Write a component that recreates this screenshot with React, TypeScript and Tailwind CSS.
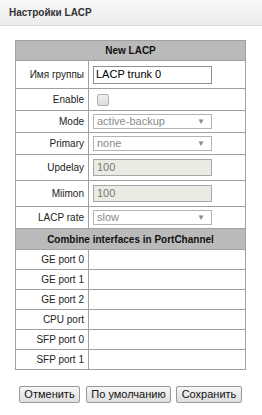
const font = { fontFamily: '"Liberation Sans", Arial, sans-serif' };

function Label({ children }: { children: React.ReactNode }) {
  return (
    <div className="w-[73px] shrink-0 h-full border-r border-[#a0a0a0] flex items-center justify-end pr-[4px] text-[10px] text-[#222] whitespace-nowrap">
      {children}
    </div>
  );
}

function Row({ label, h, children }: { label: string; h: string; children?: React.ReactNode }) {
  return (
    <div className={`flex border-b border-[#a0a0a0] ${h}`}>
      <Label>{label}</Label>
      <div className="flex-1 flex items-center pl-[4px]">{children}</div>
    </div>
  );
}

function Select({ value }: { value: string }) {
  return (
    <div className="w-[119px] h-[15px] border border-[#b4b4b4] bg-white flex items-center justify-between pl-[3px] pr-[6px] text-[11px] text-[#8a8a8a] leading-none">
      <span>{value}</span>
      <span className="text-[8px] text-[#888]">▼</span>
    </div>
  );
}

function Disabled({ value }: { value: string }) {
  return (
    <div className="w-[119px] h-[17px] border border-[#a8a8a8] bg-[#ebebe4] flex items-center pl-[3px] text-[11px] text-[#777] leading-none">
      {value}
    </div>
  );
}

function Head({ title, h }: { title: string; h: string }) {
  return (
    <div className={`${h} border-b border-[#a0a0a0] bg-[#bababa] flex items-center justify-center text-[10px] font-bold text-[#111]`}>
      {title}
    </div>
  );
}

function Btn({ w, children }: { w: string; children: React.ReactNode }) {
  return (
    <button className={`${w} h-[17px] border border-[#999] rounded-[2px] bg-gradient-to-b from-[#f6f6f6] to-[#dedede] text-[11px] text-[#111] leading-none whitespace-nowrap flex items-center justify-center`}>
      {children}
    </button>
  );
}

export default function App() {
  const ports = ['GE port 0', 'GE port 1', 'GE port 2', 'CPU port', 'SFP port 0', 'SFP port 1'];
  return (
    <div className="w-[262px] h-[415px] bg-white" style={font}>
      <div className="h-[26px] border-b border-[#d4d4d4] bg-gradient-to-b from-[#f8f8f8] to-[#ececec] flex items-center pl-[9px] text-[10px] font-bold text-[#333]">
        Настройки LACP
      </div>

      <div className="ml-[15px] mt-[14px] w-[231px] border-l border-r border-t border-[#a0a0a0]">
        <Head title="New LACP" h="h-[20px]" />
        <Row label="Имя группы" h="h-[28px]">
          <div className="w-[119px] h-[18px] border border-[#8f8f8f] bg-white flex items-center pl-[2px] text-[11px] text-black leading-none">
            LACP trunk 0
          </div>
        </Row>
        <Row label="Enable" h="h-[22px]">
          <span className="ml-[4px] w-[12px] h-[12px] rounded-[2px] border border-[#b0b0b0] bg-gradient-to-b from-[#f0f0f0] to-[#dcdcdc]" />
        </Row>
        <Row label="Mode" h="h-[22px]">
          <Select value="active-backup" />
        </Row>
        <Row label="Primary" h="h-[22px]">
          <Select value="none" />
        </Row>
        <Row label="Updelay" h="h-[26px]">
          <Disabled value="100" />
        </Row>
        <Row label="Miimon" h="h-[26px]">
          <Disabled value="100" />
        </Row>
        <Row label="LACP rate" h="h-[22px]">
          <Select value="slow" />
        </Row>
        <Head title="Combine interfaces in PortChannel" h="h-[21px]" />
        {ports.map(p => (
          <Row key={p} label={p} h="h-[20px]" />
        ))}
      </div>

      <div className="flex mt-[16px] ml-[19px]">
        <Btn w="w-[61px]">Отменить</Btn>
        <div className="w-[6px]" />
        <Btn w="w-[85px]">По умолчанию</Btn>
        <div className="w-[5px]" />
        <Btn w="w-[66px]">Сохранить</Btn>
      </div>
    </div>
  );
}
